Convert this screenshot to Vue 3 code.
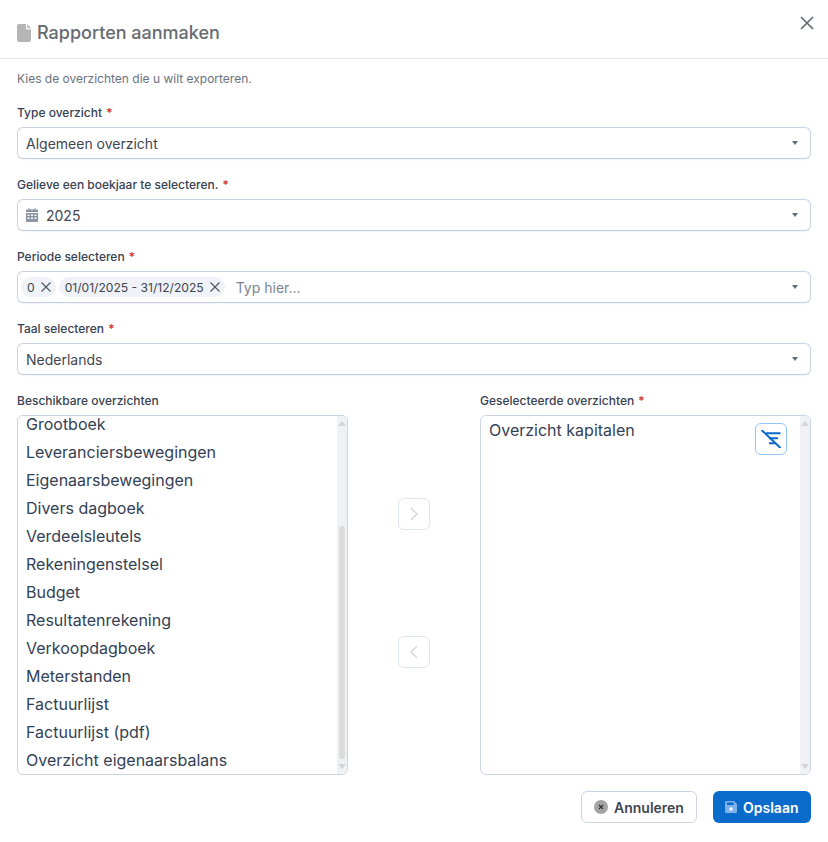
<script setup>
const fields = [
  { label: 'Type overzicht', value: 'Algemeen overzicht' },
  { label: 'Gelieve een boekjaar te selecteren.', value: '2025', calendar: true },
  { label: 'Periode selecteren', tags: ['0', '01/01/2025 - 31/12/2025'] },
  { label: 'Taal selecteren', value: 'Nederlands' },
]
const available = ['Grootboek', 'Leveranciersbewegingen', 'Eigenaarsbewegingen', 'Divers dagboek', 'Verdeelsleutels', 'Rekeningenstelsel', 'Budget', 'Resultatenrekening', 'Verkoopdagboek', 'Meterstanden', 'Factuurlijst', 'Factuurlijst (pdf)', 'Overzicht eigenaarsbalans']
</script>

<template>
  <div class="dialog">
    <header class="head">
      <svg class="doc" width="14" height="18" viewBox="0 0 14 18"><path fill="#b5b5b5" d="M2 0h7v4.500c0 .6.4 1 1 1h4V16a2 2 0 0 1-2 2H2a2 2 0 0 1-2-2V2a2 2 0 0 1 2-2zM10.200 0 14 4.300h-3.800z"/></svg>
      <h1>Rapporten aanmaken</h1>
      <svg class="close" width="14" height="14" viewBox="0 0 14 14"><path d="M1 1l12 12M13 1L1 13" stroke="#5f6b78" stroke-width="1.700" fill="none"/></svg>
    </header>
    <main class="body">
      <p class="intro">Kies de overzichten die u wilt exporteren.</p>
      <div v-for="f in fields" :key="f.label" class="field">
        <label class="lab">{{ f.label }} <i>*</i></label>
        <div class="select">
          <svg v-if="f.calendar" class="cal" width="12" height="14" viewBox="0 0 12 14"><path fill="#8b95a1" d="M2.500 0h1v1.500h5V0h1v1.500H11a1 1 0 0 1 1 1V4H0V2.500a1 1 0 0 1 1-1h1.500zM0 5h12v8a1 1 0 0 1-1 1H1a1 1 0 0 1-1-1zm1.500 1.500v1.500h2V6.500zm3.500 0v1.500h2V6.500zm3.500 0v1.500h2V6.500zm-7 3v1.500h2V9.500zm3.500 0v1.500h2V9.500zm3.500 0v1.500h2V9.500z"/></svg>
          <template v-if="f.tags">
            <span v-for="t in f.tags" :key="t" class="tag">{{ t }}<svg width="10" height="10" viewBox="0 0 10 10"><path d="M.5.5l9 9M9.500.5l-9 9" stroke="#4b5563" stroke-width="1.100" fill="none"/></svg></span>
            <span class="ph">Typ hier...</span>
          </template>
          <span v-else class="val">{{ f.value }}</span>
          <span class="caret"></span>
        </div>
      </div>
      <div class="transfer">
        <div class="col">
          <label class="lab">Beschikbare overzichten</label>
          <div class="box">
            <div class="items scrolled"><div v-for="a in available" :key="a" class="item">{{ a }}</div></div>
            <div class="bar">
              <span class="up"></span>
              <span class="track"><span class="thumb"></span></span>
              <span class="down"></span>
            </div>
          </div>
        </div>
        <div class="mid">
          <button class="move"><svg width="8" height="14" viewBox="0 0 8 14"><path d="M1 1l6 6-6 6" stroke="#d5d9de" stroke-width="1.500" fill="none"/></svg></button>
          <button class="move"><svg width="8" height="14" viewBox="0 0 8 14"><path d="M7 1L1 7l6 6" stroke="#d5d9de" stroke-width="1.500" fill="none"/></svg></button>
        </div>
        <div class="col">
          <label class="lab">Geselecteerde overzichten <i>*</i></label>
          <div class="box">
            <div class="items"><div class="item">Overzicht kapitalen</div></div>
            <button class="filter">
              <svg width="20" height="18" viewBox="0 0 20 18"><path d="M5 3.300h14.500M8 8.300h9M8 13.300h6" stroke="#0b6bcb" stroke-width="2" fill="none"/><path d="M.5 0l19 18" stroke="#0b6bcb" stroke-width="2" fill="none"/></svg>
            </button>
            <div class="bar">
              <span class="up"></span>
              <span class="track"></span>
              <span class="down"></span>
            </div>
          </div>
        </div>
      </div>
      <footer class="foot">
        <button class="btn cancel">
          <svg width="14" height="14" viewBox="0 0 14 14"><circle cx="7" cy="7" r="7" fill="#a3a3a3"/><path d="M5 5l4 4M9 5l-4 4" stroke="#333" stroke-width="1.100"/></svg>
          Annuleren
        </button>
        <button class="btn save">
          <svg width="12" height="12" viewBox="0 0 12 12"><path fill="#7fb2ea" fill-rule="evenodd" d="M1.500 0H9l3 3v7.500A1.500 1.500 0 0 1 10.500 12h-9A1.500 1.500 0 0 1 0 10.500v-9A1.500 1.500 0 0 1 1.500 0zM2 1.500V4h6.500V1.500z"/><circle cx="6" cy="8" r="1.700" fill="#fff"/></svg>
          Opslaan
        </button>
      </footer>
    </main>
  </div>
</template>

<style>
html, body { background: #fff; }
</style>

<style scoped>
.dialog {
  width: 828px;
  height: 842px;
  box-sizing: border-box;
  font-family: Inter, "Liberation Sans", sans-serif;
  color: #334155;
  overflow: hidden;
}
.head {
  height: 59px;
  box-sizing: border-box;
  border-bottom: 1px solid #e5e7eb;
  padding: 0 17px;
  display: flex;
  align-items: flex-start;
  position: relative;
}
.doc { margin-top: 24px; }
h1 {
  margin: 21px 0 0 6px;
  font-size: 18px;
  line-height: 24px;
  font-weight: 500;
  color: #666b70;
}
.close { position: absolute; left: 800px; top: 16px; }
.body { padding: 0 17px; }
.intro {
  margin: 0;
  padding-top: 11px;
  font-size: 12px;
  line-height: 18px;
  color: #6b7280;
  height: 35px;
}
.field { height: 72px; }
.lab {
  display: block;
  height: 16px;
  margin-bottom: 6px;
  font-size: 12px;
  line-height: 16px;
  font-weight: 500;
  color: #374151;
}
.lab i { color: #dc2626; font-style: normal; margin-left: 1px; }
.select {
  height: 32px;
  box-sizing: border-box;
  border: 1px solid #cbd5e1;
  border-bottom-color: #c3d0e0;
  border-radius: 6px;
  display: flex;
  align-items: center;
  padding: 0 8px;
  box-shadow: 0 1px 2px rgba(15, 23, 42, .05);
  font-size: 14px;
  color: #3f4650;
}
.val { flex: 1; }
.cal { margin-right: 8px; }
.caret {
  margin-left: auto;
  margin-right: 4px;
  width: 0;
  height: 0;
  border: 3.500px solid transparent;
  border-top: 4px solid #5f6b78;
  border-bottom: 0;
}
.tag {
  height: 20px;
  border-radius: 10px;
  background: #eff2f6;
  display: flex;
  align-items: center;
  gap: 6px;
  padding: 0 5px 0 6px;
  margin-left: -5px;
  margin-right: 8px;
  font-size: 12.100px;
  color: #3f4650;
}
.ph { margin-left: 3px; font-size: 14px; color: #7b8490; }
.transfer {
  display: flex;
  height: 382px;
}
.col { width: 331px; flex: none; }
.box {
  height: 360px;
  box-sizing: border-box;
  border: 1px solid #cbd5e1;
  border-radius: 6px;
  position: relative;
  overflow: hidden;
  display: flex;
}
.items { flex: 1; font-size: 16px; color: #334155; }
.scrolled { margin-top: -6px; }
.item { height: 28px; line-height: 28px; padding-left: 8px; white-space: nowrap; }
.bar {
  width: 10px;
  background: #eff1f5;
  display: flex;
  flex-direction: column;
  align-items: center;
}
.up, .down { height: 15px; display: flex; align-items: center; flex: none; }
.up::before { content: ""; border: 4px solid transparent; border-bottom: 5px solid #d4d4d4; border-top: 0; }
.down::before { content: ""; border: 4px solid transparent; border-top: 5px solid #d4d4d4; border-bottom: 0; }
.track { flex: 1; width: 6px; padding-top: 95px; }
.thumb { display: block; height: 233px; background: #dcdcdc; border-radius: 3px; }
.mid {
  flex: 1;
  display: flex;
  flex-direction: column;
  align-items: center;
  justify-content: center;
  gap: 106px;
  padding-bottom: 2px;
}
.move {
  width: 32px;
  height: 32px;
  padding: 0;
  background: #fff;
  border: 1px solid #dbe7f3;
  border-radius: 6px;
  display: flex;
  align-items: center;
  justify-content: center;
}
.filter {
  position: absolute;
  left: 274px;
  top: 7px;
  width: 32px;
  height: 32px;
  padding: 0;
  background: #fff;
  border: 1px solid #93c5fd;
  border-radius: 6px;
  display: flex;
  align-items: center;
  justify-content: center;
}
.foot {
  display: flex;
  justify-content: flex-end;
  gap: 16px;
  margin-top: 16px;
}
.btn {
  height: 32px;
  box-sizing: border-box;
  border-radius: 6px;
  display: flex;
  align-items: center;
  gap: 6px;
  font-family: inherit;
  font-size: 14px;
  font-weight: 600;
  padding: 0 12px;
}
.cancel { background: #fff; border: 1px solid #cbd5e1; color: #3f4650; width: 116px; }
.save { background: #0b6bcb; border: 0; color: #fff; width: 98px; }
</style>
